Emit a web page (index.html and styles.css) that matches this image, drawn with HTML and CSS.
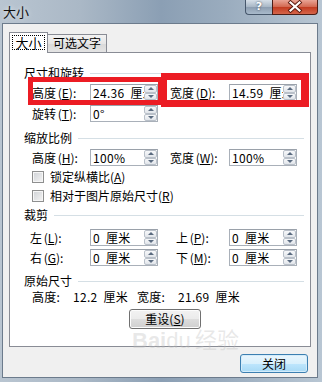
FILE: index.html
```html
<!DOCTYPE html>
<html lang="zh-CN">
<head>
    <meta charset="UTF-8">
    <title>大小</title>
    <link rel="stylesheet" href="styles.css">
</head>
<body>
    <div class="window">
        <div class="titlebar">
            <span class="title">大小</span>
            <div class="caption-buttons">
                <span class="cap-help">?</span>
                <span class="cap-close">
                    <svg width="44" height="13" viewBox="0 0 44 13">
                        <path d="M17.5 2.5 L26.5 10.5 M26.5 2.5 L17.5 10.5" stroke="#5a1a10" stroke-width="4" stroke-linecap="square"/>
                        <path d="M17.5 2.5 L26.5 10.5 M26.5 2.5 L17.5 10.5" stroke="#fff" stroke-width="2.2" stroke-linecap="square"/>
                    </svg>
                </span>
            </div>
        </div>

        <div class="client">
            <div class="tabs">
                <div class="tab active"><span class="focus">大小</span></div>
                <div class="tab">可选文字</div>
            </div>

            <div class="panel">
                <div class="group-title">尺寸和旋转</div>
                <div class="row first">
                    <span class="lbl">高度 (<u>E</u>):</span>
                    <div class="spin"><span class="val">24.36 厘米</span><span class="arrows"><i></i><i class="dn"></i></span></div>
                    <span class="lbl">宽度 (<u>D</u>):</span>
                    <div class="spin"><span class="val">14.59 厘米</span><span class="arrows"><i></i><i class="dn"></i></span></div>
                </div>
                <div class="row">
                    <span class="lbl">旋转 (<u>T</u>):</span>
                    <div class="spin"><span class="val">0°</span><span class="arrows"><i></i><i class="dn"></i></span></div>
                </div>

                <div class="group-title g2">缩放比例</div>
                <div class="row first">
                    <span class="lbl">高度 (<u>H</u>):</span>
                    <div class="spin"><span class="val">100%</span><span class="arrows"><i></i><i class="dn"></i></span></div>
                    <span class="lbl">宽度 (<u>W</u>):</span>
                    <div class="spin"><span class="val">100%</span><span class="arrows"><i></i><i class="dn"></i></span></div>
                </div>
                <div class="check c1"><span class="box"></span>锁定纵横比(<u>A</u>)</div>
                <div class="check c2"><span class="box"></span>相对于图片原始尺寸(<u>R</u>)</div>

                <div class="group-title g3">裁剪</div>
                <div class="row crop first-crop">
                    <span class="lbl">左 (<u>L</u>):</span>
                    <div class="spin"><span class="val">0 厘米</span><span class="arrows"><i></i><i class="dn"></i></span></div>
                    <span class="lbl">上 (<u>P</u>):</span>
                    <div class="spin"><span class="val">0 厘米</span><span class="arrows"><i></i><i class="dn"></i></span></div>
                </div>
                <div class="row crop second-crop">
                    <span class="lbl">右 (<u>G</u>):</span>
                    <div class="spin"><span class="val">0 厘米</span><span class="arrows"><i></i><i class="dn"></i></span></div>
                    <span class="lbl">下 (<u>M</u>):</span>
                    <div class="spin"><span class="val">0 厘米</span><span class="arrows"><i></i><i class="dn"></i></span></div>
                </div>

                <div class="group-title g4">原始尺寸</div>
                <div class="orig">
                    <span class="k">高度:</span><span class="v">12.2 厘米</span><span class="k">宽度:</span><span>21.69 厘米</span>
                </div>
                <button class="btn reset">重设(<u>S</u>)</button>
            </div>

            <div class="footer">
                <button class="btn default">关闭</button>
            </div>
        </div>
    </div>

    <div class="watermark"><b>Bai</b><span class="paw">du</span>经验</div>
    <div class="mark mark-left"></div>
    <div class="mark mark-right"></div>
</body>
</html>
```

FILE: styles.css
```css
* {
    box-sizing: border-box;
}
body {
    margin: 0;
    width: 322px;
    height: 382px;
    overflow: hidden;
    font-family: "Noto Sans CJK SC", sans-serif;
    font-size: 12px;
    color: #000;
    background: #9fb0c1;
}
.window {
    height: 382px;
    display: flex;
    flex-direction: column;
    padding: 0 4px 4px 2px;
    background: linear-gradient(90deg, #b9c5d1 0%, #aab8c6 25%, #8b9fb4 50%, #9aacbe 70%, #b8c6d3 100%);
}
.titlebar {
    height: 23px;
    display: flex;
    align-items: flex-start;
}
.title {
    margin: 3px 0 0 1px;
    font-size: 13px;
    line-height: 17px;
    color: #111;
    text-shadow: 0 0 5px rgba(255, 255, 255, 0.7);
}
.caption-buttons {
    margin-left: auto;
    display: flex;
    height: 15px;
}
.cap-help {
    width: 27px;
    height: 15px;
    border: 1px solid #46576b;
    border-top: none;
    border-right: none;
    border-radius: 0 0 0 4px;
    background: linear-gradient(#d6dfe8, #a7b6c5 50%, #8c9db0 51%, #a9bacb);
    color: #fff;
    font-family: "DejaVu Sans", sans-serif;
    font-weight: bold;
    font-size: 11px;
    line-height: 14px;
    text-align: center;
    text-shadow: 0 0 2px #2c3a4a;
}
.cap-close {
    width: 46px;
    height: 15px;
    border: 1px solid #4b1d16;
    border-top: none;
    border-radius: 0 0 4px 0;
    background: linear-gradient(#e9a495, #d2674f 50%, #c23b20 51%, #d5654a);
    display: flex;
    justify-content: center;
}
.client {
    flex: 1;
    display: flex;
    flex-direction: column;
    background: #f0f0f0;
    border: 1px solid #6c7b8c;
    padding: 8px 6px 0 6px;
}
.tabs {
    height: 20px;
    display: flex;
    align-items: flex-end;
}
.tab {
    height: 18px;
    width: 60px;
    border: 1px solid #898c95;
    border-bottom: none;
    background: linear-gradient(#f3f3f3, #e6e6e6 50%, #d9d9d9 51%, #e4e4e4);
    text-align: center;
    line-height: 16px;
}
.tab.active {
    position: relative;
    z-index: 1;
    width: 39px;
    height: 21px;
    margin-bottom: -1px;
    margin-right: -1px;
    background: #fff;
    padding: 2px 2px 0 2px;
}
.focus {
    display: block;
    height: 15px;
    border: 1px dotted #000;
    line-height: 13px;
    font-size: 13px;
}
.panel {
    height: 295px;
    border: 1px solid #898c95;
    background: #fff;
    padding: 13px 6px 0 14px;
}
.group-title {
    display: flex;
    align-items: center;
    height: 14px;
    line-height: 14px;
}
.group-title::after {
    content: "";
    flex: 1;
    height: 1px;
    margin-left: 6px;
    background: #d5dfe5;
}
.g2 {
    margin-top: 9px;
}
.g3 {
    margin-top: 5px;
}
.g4 {
    margin-top: 8px;
}
.row {
    display: grid;
    grid-template-columns: 58px 80px 59px 69px;
    align-items: center;
    height: 17px;
    margin: 4px 0 0 8px;
}
.crop {
    margin-left: 6px;
    grid-template-columns: 60px 86px 53px 69px;
}
.first-crop {
    margin-top: 7px;
}
.second-crop {
    margin-top: 3px;
}
.lbl {
    line-height: 16px;
    white-space: nowrap;
    word-spacing: -1px;
}
u {
    text-underline-offset: 1px;
}
.spin {
    width: 68px;
    height: 17px;
    border: 1px solid #a9b0b9;
    border-top-color: #9aa1aa;
    background: #fff;
    display: flex;
    align-items: center;
}
.val {
    flex: 1;
    padding-left: 2px;
    overflow: hidden;
    white-space: nowrap;
    line-height: 15px;
    word-spacing: 3px;
    letter-spacing: 0.3px;
}
.arrows {
    width: 13px;
    height: 15px;
    display: flex;
    flex-direction: column;
}
.arrows i {
    flex: 1;
    border: 1px solid #b9c0c9;
    border-radius: 2px;
    background: linear-gradient(#f7f8fa, #e1e5ea);
    display: flex;
    align-items: center;
    justify-content: center;
}
.arrows i::before {
    content: "";
    border-left: 3px solid transparent;
    border-right: 3px solid transparent;
    border-bottom: 3px solid #5a6b80;
}
.arrows i.dn::before {
    border-bottom: 0;
    border-top: 3px solid #5a6b80;
}
.check {
    display: flex;
    align-items: center;
    height: 14px;
    line-height: 14px;
    padding-left: 8px;
    color: #000;
}
.c1 {
    margin-top: 4px;
}
.c2 {
    margin-top: 5px;
}
.box {
    width: 12px;
    height: 12px;
    margin-right: 6px;
    border: 1px solid #8e8f8f;
    background: linear-gradient(135deg, #cfd2d6, #f4f4f4);
    box-shadow: inset 0 0 0 1px #f6f6f6;
}
.orig {
    margin: 2px 0 0 8px;
    height: 14px;
    line-height: 14px;
    white-space: nowrap;
    word-spacing: 3px;
    letter-spacing: 0.3px;
}
.orig .k {
    display: inline-block;
    width: 41px;
}
.orig .v {
    display: inline-block;
    width: 64px;
}
.btn {
    font-family: "Noto Sans CJK SC", sans-serif;
    font-size: 12px;
    color: #000;
    padding: 0;
    border: 1px solid #707070;
    border-radius: 3px;
    background: linear-gradient(#f2f2f2, #ebebeb 50%, #dddddd 51%, #cfcfcf);
    box-shadow: inset 0 0 0 1px #fcfcfc;
    line-height: 16px;
}
.reset {
    display: block;
    width: 72px;
    height: 20px;
    margin: 5px 0 0 105px;
}
.footer {
    display: flex;
    justify-content: flex-end;
    margin-top: 7px;
}
.default {
    width: 68px;
    height: 19px;
    margin-right: 3px;
    border-color: #3c7fb1;
    background: linear-gradient(#eaf6fd, #d9f0fc 50%, #bee6fd 51%, #a7d9f5);
    box-shadow: inset 0 0 0 1px #d4ecfa;
}
.watermark {
    position: absolute;
    left: 132px;
    top: 322px;
    font-family: "Liberation Sans", sans-serif;
    font-size: 22px;
    color: rgba(190, 190, 190, 0.35);
    white-space: nowrap;
}
.watermark .paw {
    margin-right: 4px;
}
.mark {
    position: absolute;
    border: 5px solid #ec1c24;
}
.mark-left {
    left: 28px;
    top: 77px;
    width: 135px;
    height: 28px;
}
.mark-right {
    left: 161px;
    top: 73px;
    width: 148px;
    height: 34px;
    border-width: 7px 8px 7px 6px;
}
```
